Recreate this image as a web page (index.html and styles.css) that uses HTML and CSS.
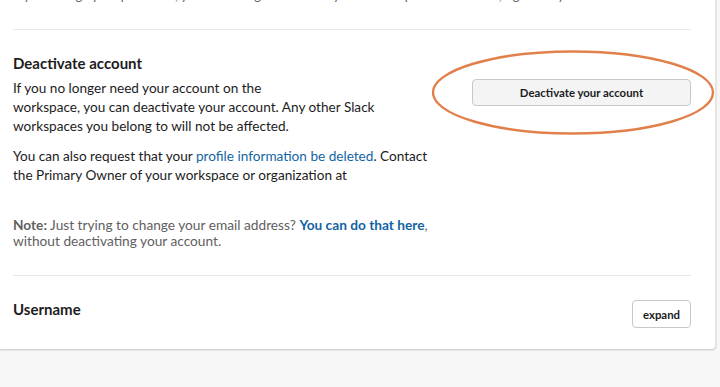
FILE: index.html
```html
<!DOCTYPE html>
<html>
	<head>
		<meta charset="UTF-8">
		<title>Account settings</title>
		<link rel="stylesheet" href="styles.css">
	</head>
	<body>
		<div class="card">
			<div class="section section-top">
				<p class="hint">If you change your password, you will be signed out everywhere except on this device, right away.</p>
			</div>

			<div class="section row section-main">
				<div class="info">
					<h2 class="title">Deactivate account</h2>
					<p class="text">If you no longer need your account on the<br>
					workspace, you can deactivate your account. Any other Slack<br>
					workspaces you belong to will not be affected.</p>
					<p class="text">You can also request that your <a href="###" class="link">profile information be deleted</a>. Contact<br>
					the Primary Owner of your workspace or organization at</p>
					<p class="note"><b>Note:</b> Just trying to change your email address? <a href="###" class="link strong">You can do that here</a>,<br>
					without deactivating your account.</p>
				</div>
				<div class="side">
					<button class="btn btn-grey">Deactivate your account</button>
				</div>
			</div>

			<div class="section row">
				<div class="info">
					<h2 class="title">Username</h2>
				</div>
				<div class="side side-top">
					<button class="btn btn-small">expand</button>
				</div>
			</div>
		</div>

		<!-- annotation ring around the button -->
		<svg class="ring" width="290" height="92" viewBox="0 0 290 92">
			<ellipse cx="141" cy="42.5" rx="140" ry="41" fill="none" stroke="#e2804c" stroke-width="2.4"/>
		</svg>
	</body>
</html>
```

FILE: styles.css
```css
*{
	margin: 0;
	padding: 0;
	box-sizing: border-box;
}
body{
	background: #f7f7f7;
	font-family: Lato, "Noto Sans", sans-serif;
	color: #1d1c1d;
	position: relative;
	height: 387px;
	overflow: hidden;
}
.card{
	width: 716px;
	background: #fff;
	padding: 0 24px 0 13px;
	border-right: 1px solid #e2e2e2;
	border-bottom-right-radius: 4px;
	box-shadow: 0 1px 2px rgba(0,0,0,.22);
}
.section{
	padding: 23px 0 21px;
}
.section + .section{
	border-top: 1px solid #e8e8e8;
}
.section-top{
	margin-top: -13px;
	padding: 0 0 26px;
}
.section-main{
	padding-bottom: 26px;
}
.hint{
	font-size: 13px;
	line-height: 16px;
	color: #616061;
	white-space: nowrap;
}
.row{
	display: flex;
}
.info{
	flex: 1;
}
.title{
	font-size: 15px;
	line-height: 20px;
	font-weight: 700;
}
.text{
	font-size: 13.6px;
	line-height: 19px;
	margin-top: 6px;
}
.text + .text{
	margin-top: 11px;
}
.note{
	font-size: 13.7px;
	line-height: 16px;
	color: #616061;
	margin-top: 32px;
}
.note b{
	font-weight: 700;
}
.link{
	color: #1264a3;
	text-decoration: none;
}
.link.strong{
	font-weight: 700;
}
.side{
	padding-top: 26px;
}
.side-top{
	padding-top: 1px;
}
.btn{
	font-family: Lato, "Noto Sans", sans-serif;
	font-weight: 700;
	color: #1d1c1d;
	border: 1px solid #c8c8c8;
	border-radius: 4px;
	cursor: pointer;
}
.btn-grey{
	width: 219px;
	height: 27px;
	font-size: 11.4px;
	background: #f4f4f4;
}
.btn-small{
	width: 59px;
	height: 28px;
	font-size: 11.4px;
	background: #fff;
}
.ring{
	position: absolute;
	left: 432px;
	top: 50px;
}
```
